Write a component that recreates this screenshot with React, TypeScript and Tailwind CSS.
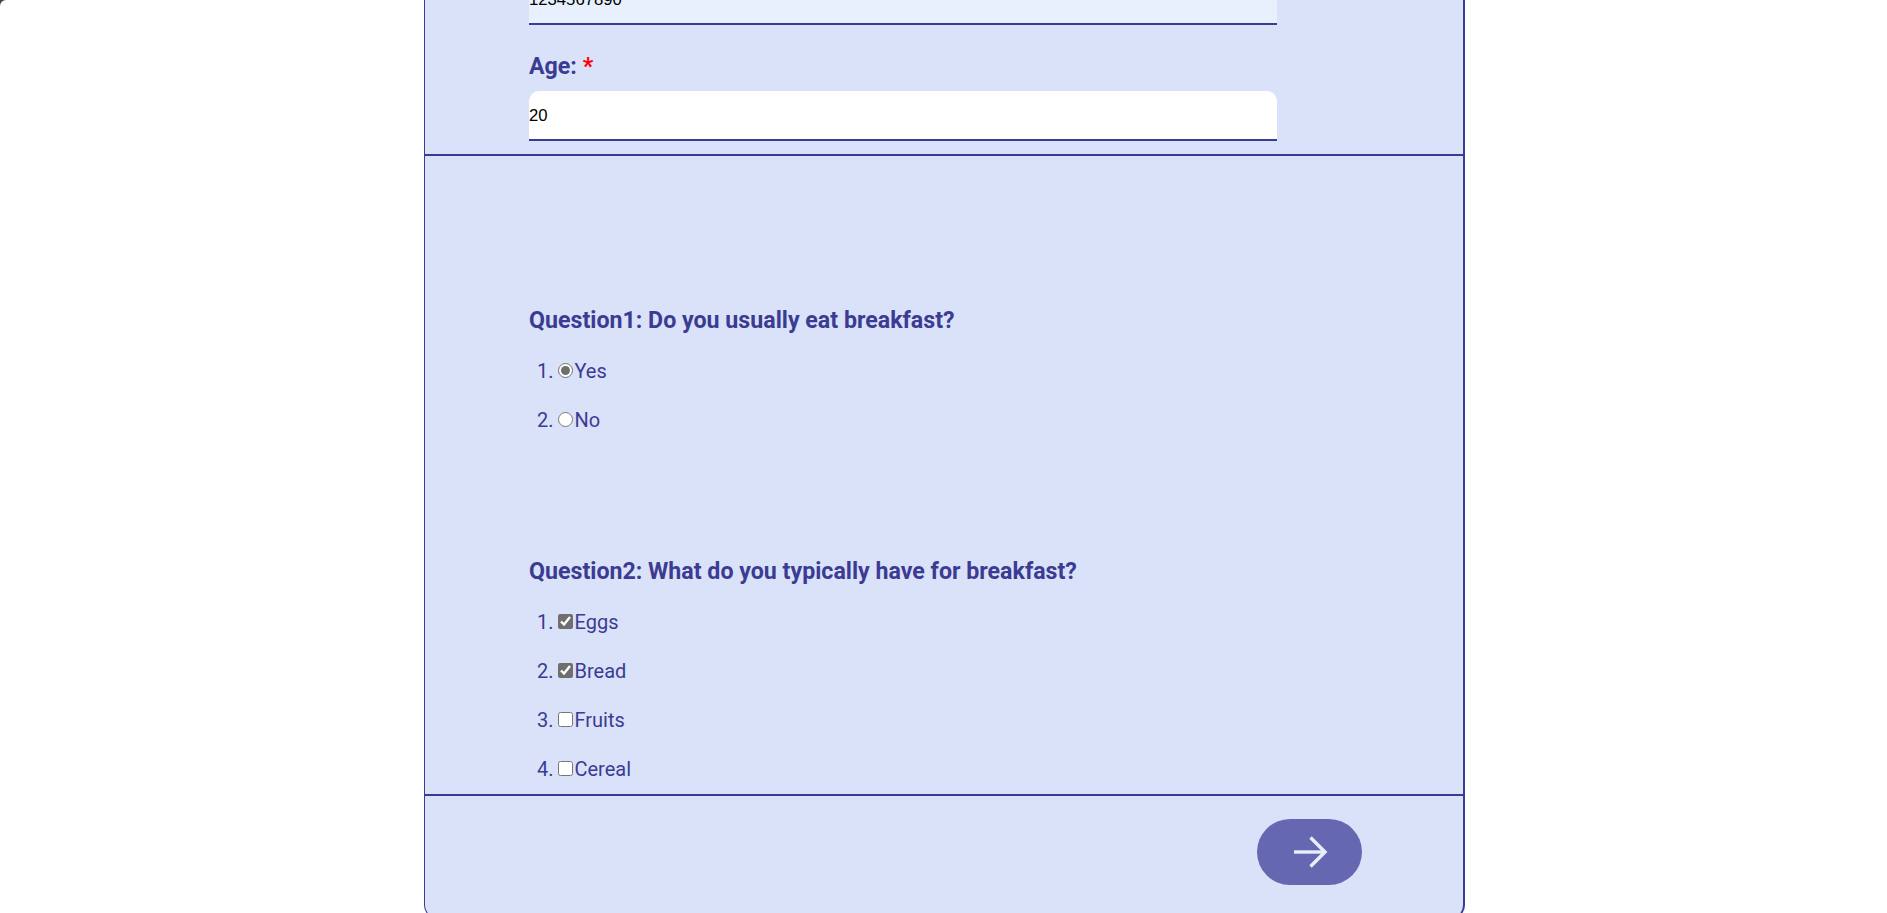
import { useState } from "react";

const INK = "text-[#3c3b93]";

function Field({
  label,
  value,
  onChange,
  autofilled,
  className,
}: {
  label?: string;
  value: string;
  onChange: (v: string) => void;
  autofilled?: boolean;
  className?: string;
}) {
  return (
    <div className={className}>
      {label && (
        <label className={`block h-[28px] leading-[28px] text-[23.2px] font-bold ${INK}`}>
          {label} <span className="text-[#ff0000]">*</span>
        </label>
      )}
      <input
        value={value}
        onChange={(e) => onChange(e.target.value)}
        className={`block w-[748px] h-[50px] rounded-t-[10px] border-b-2 border-[#3c3b93] px-0 pt-[2px] text-[16.7px] text-black font-['Liberation_Sans',Arial,sans-serif] outline-none ${
          autofilled ? "bg-[#e8f0fe]" : "bg-white"
        } ${label ? "mt-[11px]" : ""}`}
      />
    </div>
  );
}

function Question({
  title,
  type,
  options,
  picked,
  onPick,
  className,
}: {
  title: string;
  type: "radio" | "checkbox";
  options: string[];
  picked: string[];
  onPick: (o: string) => void;
  className?: string;
}) {
  return (
    <div className={className}>
      <h3 className={`h-[28px] leading-[28px] text-[23.2px] font-bold ${INK}`}>{title}</h3>
      <ol className={`mt-[13px] list-decimal list-inside pl-[8px] text-[20px] ${INK}`}>
        {options.map((o) => (
          <li key={o} className="h-[49px] leading-[49px]">
            <label>
              <input
                type={type}
                name={title}
                checked={picked.includes(o)}
                onChange={() => onPick(o)}
                className="m-0 mr-px w-[15px] h-[15px] accent-[#6f6f6f]"
              />
              {o}
            </label>
          </li>
        ))}
      </ol>
    </div>
  );
}

export default function App() {
  const [phone, setPhone] = useState("1234567890");
  const [age, setAge] = useState("20");
  const [q1, setQ1] = useState<string[]>(["Yes"]);
  const [q2, setQ2] = useState<string[]>(["Eggs", "Bread"]);

  return (
    <div className="relative h-[913px] overflow-hidden bg-white font-['Roboto','Noto_Sans',sans-serif]">
      {/* window corner */}
      <div className="absolute top-0 left-0 w-[6px] h-[6px] bg-[#444]">
        <div className="w-full h-full bg-white rounded-tl-[6px]" />
      </div>

      <div className="ml-[424px] w-[1041px] h-[944px] bg-[#d9e2f8] border-l border-r-2 border-b border-[#3c3b93] rounded-b-[14px]">
        <section className="pl-[104px] pb-[13px] border-b-2 border-[#3c3b93]">
          <div className="-mt-[25px]">
            <Field value={phone} onChange={setPhone} autofilled />
            <Field label="Age:" value={age} onChange={setAge} className="mt-[27px]" />
          </div>
        </section>

        <section className="pl-[104px] pt-[150px] border-b-2 border-[#3c3b93]">
          <Question
            title="Question1: Do you usually eat breakfast?"
            type="radio"
            options={["Yes", "No"]}
            picked={q1}
            onPick={(o) => setQ1([o])}
          />
          <Question
            title="Question2: What do you typically have for breakfast?"
            type="checkbox"
            options={["Eggs", "Bread", "Fruits", "Cereal"]}
            picked={q2}
            onPick={(o) =>
              setQ2((p) => (p.includes(o) ? p.filter((x) => x !== o) : [...p, o]))
            }
            className="mt-[112px]"
          />
        </section>

        <section className="flex justify-end pt-[23px] pr-[101px]">
          <button className="flex items-center justify-center w-[105px] h-[66px] rounded-full bg-[#6568b0]">
            <svg width="36" height="34" viewBox="0 0 36 34" fill="none" stroke="#e8eefb" strokeWidth="3.4">
              <path d="M2 17h31" />
              <path d="M18.5 2.5 33 17 18.5 31.5" />
            </svg>
          </button>
        </section>
      </div>
    </div>
  );
}
